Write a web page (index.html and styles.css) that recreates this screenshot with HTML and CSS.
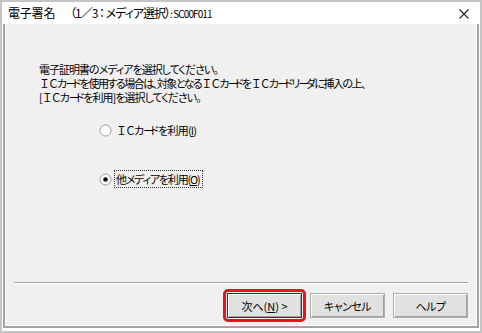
FILE: index.html
```html
<!DOCTYPE html>
<html lang="ja">
<head>
<meta charset="utf-8">
<link rel="stylesheet" href="styles.css">
</head>
<body>
<div class="shot">
  <div class="win">
    <div class="title">
      <span class="title-text">電子署名　<span class="tp">（1／3 ： メディア選択）</span><span class="code">: SC00F011</span></span>
      <svg class="close" width="10" height="10" viewBox="0 0 10 10"><path d="M0.5 0.5 L9.5 9.5 M9.5 0.5 L0.5 9.5" stroke="#222" stroke-width="1.1" fill="none"/></svg>
    </div>
    <div class="client">
      <div class="msg">
        <p class="l1">電子証明書のメディアを選択してください。</p>
        <p class="l2"><span class="ic">ＩＣ</span>カ<span class="nb">ー</span>ドを使用する場合は、対象となる<span class="ic">ＩＣ</span>カ<span class="nb">ー</span>ドを<span class="ic">ＩＣ</span>カ<span class="nb">ー</span>ドリ<span class="nb">ー</span>ダに挿入の上、</p>
        <p class="l3">[<span class="ic">ＩＣ</span>カ<span class="nb">ー</span>ドを利用]を選択してください。</p>
      </div>
      <div class="options">
        <div class="opt">
          <svg class="radio" width="13" height="13" viewBox="0 0 13 13"><circle cx="6.5" cy="6.5" r="5.5" fill="#fff" stroke="#9a9a9a"/></svg>
          <span class="lbl"><span class="ic">ＩＣ</span>カ<span class="nb">ー</span>ドを利用(<u>I</u>)</span>
        </div>
        <div class="opt opt2">
          <svg class="radio" width="13" height="13" viewBox="0 0 13 13"><circle cx="6.5" cy="6.5" r="5.5" fill="#fff" stroke="#9a9a9a"/><circle cx="6.5" cy="6.5" r="2.3" fill="#111"/></svg>
          <span class="lbl focus">他メディアを利用(<u>O</u>)</span>
        </div>
      </div>
      <div class="sep"></div>
      <div class="buttons">
        <div class="hl"><button class="btn def">次へ(<u>N</u>) &gt;</button></div>
        <button class="btn">キャンセル</button>
        <button class="btn">ヘルプ</button>
      </div>
    </div>
  </div>
</div>
</body>
</html>
```
FILE: styles.css
```css
html, body {
  margin: 0;
  padding: 0;
  background: #fff;
}
body {
  font-family: "Noto Sans CJK JP", "Noto Sans", sans-serif;
  color: #000;
}
.shot {
  width: 482px;
  height: 333px;
  box-sizing: border-box;
  border: 2px solid #c4c4c4;
  background: #fff;
}
.win {
  height: 100%;
  box-sizing: border-box;
  padding: 0 1px 3px 1px;
  display: flex;
  flex-direction: column;
}
.title {
  height: 22px;
  flex: none;
  display: flex;
  align-items: center;
  justify-content: space-between;
  padding: 0 10px 0 5px;
  font-size: 12px;
}
.title-text {
  line-height: 22px;
  white-space: nowrap;
  letter-spacing: -0.2px;
}
.tp {
  font-feature-settings: "palt";
  letter-spacing: -1px;
  margin-left: 3px;
}
.code {
  font-size: 10px;
  letter-spacing: -0.9px;
}
.close {
  display: block;
  margin-top: 1px;
}
.client {
  flex: 1;
  background: #f0f0f0;
  border: 2px solid #a3a3a3;
  border-top: none;
  box-shadow: inset 1px 0 0 #fff, inset -1px 0 0 #fff, inset 0 -1px 0 #fff;
  display: flex;
  flex-direction: column;
  font-size: 11px;
  font-feature-settings: "palt";
}
.msg {
  padding: 38px 0 0 34px;
}
.msg p {
  margin: 0;
  line-height: 14px;
  height: 14px;
  white-space: nowrap;
  letter-spacing: -1px;
}
.msg .l2 {
  letter-spacing: -1.5px;
}
.ic {
  font-feature-settings: normal;
  letter-spacing: -2px;
}
.nb {
  letter-spacing: -4px;
}
.options {
  padding: 18px 0 0 94px;
  display: flex;
  flex-direction: column;
}
.opt {
  display: flex;
  align-items: center;
  height: 16px;
}
.opt2 {
  margin-top: 33px;
}
.radio {
  display: block;
  margin-right: 2px;
}
.lbl {
  line-height: 14px;
  padding: 1px 1px;
  border: 1px solid transparent;
  letter-spacing: -0.8px;
}
.focus {
  border: 1px dotted #333;
  letter-spacing: -1.2px;
  padding-right: 3px;
}
.sep {
  margin: 95px 9px 0 9px;
  border-top: 1px solid #a0a0a0;
  border-bottom: 1px solid #fff;
  height: 0;
}
.buttons {
  display: flex;
  justify-content: flex-end;
  align-items: center;
  gap: 8px;
  padding: 9px 9px 0 0;
}
.hl {
  border: 3px solid #e8141c;
  border-radius: 5px;
  padding: 1px;
  margin: -4px;
}
.btn {
  display: block;
  width: 75px;
  height: 25px;
  margin: 0;
  padding: 0;
  font-family: "Noto Sans CJK JP", "Noto Sans", sans-serif;
  font-size: 11px;
  font-feature-settings: "palt";
  letter-spacing: -0.5px;
  color: #000;
  background: #e1e1e1;
  border: 1px solid #adadad;
  box-shadow: inset 1px 1px 0 #fff, inset -1px -1px 0 #a0a0a0;
}
.def {
  border: 1px solid #333;
  letter-spacing: 0;
}
u {
  text-decoration: underline;
  text-underline-offset: 1px;
}
```
